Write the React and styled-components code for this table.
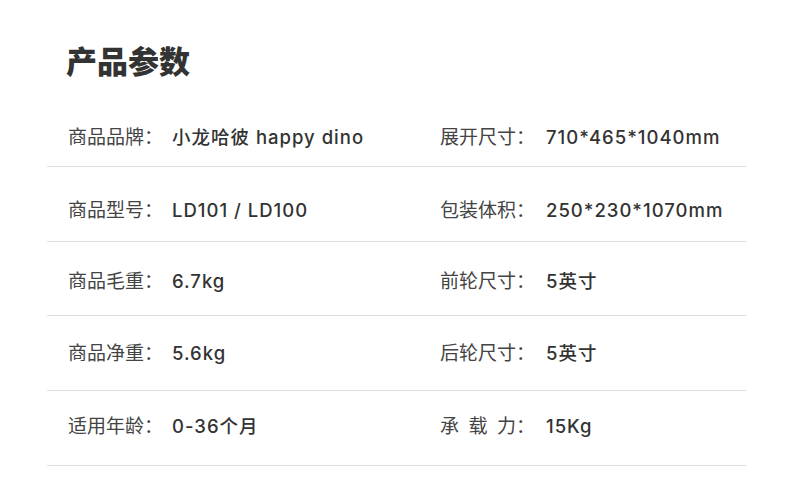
import React from "react";
import styled, { createGlobalStyle } from "styled-components";

const Global = createGlobalStyle`
  html, body { margin: 0; padding: 0; background: #ffffff; }
  body { font-family: "Noto Sans CJK SC", "Noto Sans", sans-serif; }
`;

const Page = styled.div`
  width: 790px;
  height: 497px;
  box-sizing: border-box;
  padding: 0 44px 0 47px;
  background: #fff;
  overflow: hidden;
`;

const Title = styled.h1`
  margin: 0;
  padding: 40px 0 0 19px;
  height: 53px;
  font-size: 31px;
  line-height: 40px;
  font-weight: 900;
  color: #333;
`;

const Table = styled.div`
  display: flex;
  flex-direction: column;
`;

const Row = styled.div`
  display: grid;
  grid-template-columns: 372px 1fr;
  align-items: center;
  height: ${(p) => p.$h}px;
  padding: ${(p) => p.$pt}px 0 ${(p) => p.$pb}px 21px;
  box-sizing: border-box;
  border-bottom: 1px solid #dedede;
`;

const Cell = styled.div`
  display: flex;
  align-items: baseline;
  white-space: nowrap;
`;

const Label = styled.span`
  width: ${(p) => p.$w}px;
  flex: none;
  font-size: 19px;
  color: #444;
  font-family: "Noto Sans CJK SC", sans-serif;
  white-space: pre;
`;

const Value = styled.span`
  font-size: 18.5px;
  font-weight: 500;
  color: #333;
  font-family: "Inter", "Noto Sans CJK SC", sans-serif;
  letter-spacing: 1px;
`;

const rows = [
  [["商品品牌：", "小龙哈彼 happy dino"], ["展开尺寸：", "710*465*1040mm"]],
  [["商品型号：", "LD101 / LD100"], ["包装体积：", "250*230*1070mm"]],
  [["商品毛重：", "6.7kg"], ["前轮尺寸：", "5英寸"]],
  [["商品净重：", "5.6kg"], ["后轮尺寸：", "5英寸"]],
  [["适用年龄：", "0-36个月"], ["承\u2002载\u2002力：", "15Kg"]],
];

const heights = [74, 75, 74, 75, 75];
const padTop = [12, 8, 2, 0, 0];
const padBottom = [0, 0, 0, 4, 8];

export default function App() {
  return (
    <>
      <Global />
      <Page>
        <Title>产品参数</Title>
        <Table>
          {rows.map((r, i) => (
            <Row key={i} $h={heights[i]} $pt={padTop[i]} $pb={padBottom[i]}>
              <Cell>
                <Label $w={104}>{r[0][0]}</Label>
                <Value>{r[0][1]}</Value>
              </Cell>
              <Cell>
                <Label $w={106}>{r[1][0]}</Label>
                <Value>{r[1][1]}</Value>
              </Cell>
            </Row>
          ))}
        </Table>
      </Page>
    </>
  );
}
